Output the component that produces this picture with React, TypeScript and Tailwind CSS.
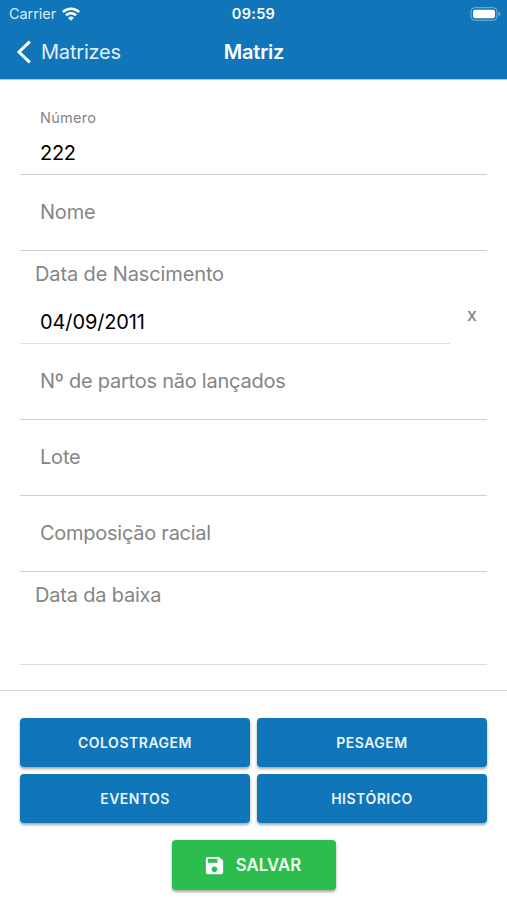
import React from "react";
import { MdSave } from "react-icons/md";

function EmptyField({ label, spacing }: { label: string; spacing: string }) {
  return (
    <div className="flex h-[76px] items-center border-b border-[#cfcfcf] pb-px pl-5">
      <span className={"text-[20px] leading-6 text-[#858585] " + spacing}>{label}</span>
    </div>
  );
}

function ActionButton({ label, spacing }: { label: string; spacing: string }) {
  return (
    <button
      type="button"
      className={
        "flex h-[49px] items-center justify-center rounded-[4px] bg-[#1176b9] text-[14px] font-semibold leading-5 text-[#eaf5fc] shadow-[0_2px_3px_rgba(0,0,0,0.35)] " +
        spacing
      }
    >
      {label}
    </button>
  );
}

export default function App() {
  return (
    <div className="flex h-[900px] w-[507px] flex-col overflow-hidden bg-white font-['Inter','Liberation_Sans',sans-serif] whitespace-nowrap">
      <header className="h-[80px] shrink-0 border-b border-[#a6cde6] bg-[#1176b9] bg-clip-padding text-white">
        <div className="grid h-[27px] grid-cols-3 items-center">
          <div className="flex items-center gap-[6px] pl-[9px] text-[#dcecf7]">
            <span className="text-[14.5px] leading-5 tracking-[-0.004em]">Carrier</span>
            <svg width="18" height="14" viewBox="0 0 18 14" fill="none" stroke="#fff" strokeWidth="2.5">
              <path d="M.9 5.1a11.5 11.5 0 0 1 16.2 0" />
              <path d="M4 8.4a7.1 7.1 0 0 1 10 0" />
              <path d="M9 13.8 6.2 10.9a4 4 0 0 1 5.6 0Z" fill="#fff" stroke="none" />
            </svg>
          </div>
          <span className="text-center text-[14.5px] font-semibold leading-5 tracking-[0.02em]">09:59</span>
          <svg className="mr-[6px] justify-self-end" width="31" height="14" viewBox="0 0 31 14">
            <rect x="1" y=".7" width="26" height="12.6" rx="3.8" fill="none" stroke="#79b3da" />
            <rect x="3" y="2.7" width="22" height="8.6" rx="2" fill="#fff" />
            <path d="M28.5 4.8c2.4.9 2.4 3.5 0 4.4Z" fill="#79b3da" />
          </svg>
        </div>
        <nav className="grid h-[50px] grid-cols-3 items-center">
          <div className="flex items-center gap-[9px] pl-[16px]">
            <svg width="16" height="24" viewBox="0 0 16 24" fill="none" stroke="#fff" strokeWidth="3">
              <path d="M13.8 1.6 3 12l10.8 10.4" />
            </svg>
            <span className="text-[20px] leading-6 tracking-[-0.01em] text-[#e2f0f9]">Matrizes</span>
          </div>
          <h1 className="pl-px text-center text-[20px] font-semibold leading-6 tracking-[-0.01em]">Matriz</h1>
        </nav>
      </header>

      <main className="flex flex-col px-5 pt-[19px]">
        <div className="flex h-[76px] flex-col border-b border-[#cfcfcf] pl-5 pt-[9px]">
          <label className="text-[14.5px] leading-5 tracking-[0.018em] text-[#858585]">Número</label>
          <span className="mt-[13px] text-[20px] leading-6 tracking-[-0.015em] text-black">222</span>
        </div>
        <EmptyField label="Nome" spacing="tracking-[-0.01em]" />

        <div className="flex h-[93px]">
          <div className="flex w-[430px] flex-col border-b border-[#e2e2e2]">
            <span className="ml-[15px] mt-[11px] text-[20px] leading-6 tracking-[-0.006em] text-[#858585]">Data de Nascimento</span>
            <span className="ml-5 mt-6 text-[20px] leading-6 tracking-[-0.006em] text-black">04/09/2011</span>
          </div>
          <button type="button" className="ml-[17px] mt-[54px] h-5 text-[18px] leading-5 text-[#777]">x</button>
        </div>

        <EmptyField label="Nº de partos não lançados" spacing="tracking-[-0.012em]" />
        <EmptyField label="Lote" spacing="tracking-[-0.01em]" />
        <EmptyField label="Composição racial" spacing="tracking-[-0.013em]" />

        <div className="h-[93px] border-b border-[#dedede] pl-[15px] pt-[11px]">
          <span className="block text-[20px] leading-6 tracking-[-0.01em] text-[#858585]">Data da baixa</span>
        </div>
      </main>

      <footer className="mt-[25px] flex flex-col items-center border-t border-[#d6d6d6] px-5 pt-[27px]">
        <div className="grid w-full grid-cols-2 gap-x-[7px] gap-y-[7px]">
          <ActionButton label="COLOSTRAGEM" spacing="tracking-[0.037em]" />
          <ActionButton label="PESAGEM" spacing="tracking-[0.035em]" />
          <ActionButton label="EVENTOS" spacing="tracking-[0.03em]" />
          <ActionButton label="HISTÓRICO" spacing="tracking-[0.037em]" />
        </div>
        <button
          type="button"
          className="mt-[17px] flex h-[50px] w-[164px] items-center justify-center gap-[10px] rounded-[4px] bg-[#2dbd4e] pr-[3px] text-[16.8px] font-semibold leading-6 tracking-[0.002em] text-[#f1fff4] shadow-[0_2px_3px_rgba(0,0,0,0.35)]"
        >
          <MdSave size={23} className="text-white" />
          <span>SALVAR</span>
        </button>
      </footer>
    </div>
  );
}
